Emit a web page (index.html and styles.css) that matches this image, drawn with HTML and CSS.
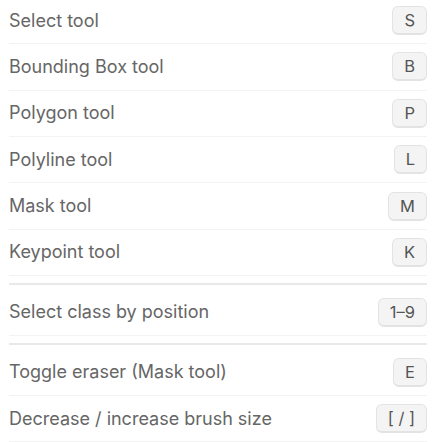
FILE: index.html
```html
<!DOCTYPE html>
<html>
<head>
<meta charset="utf-8">
<link rel="stylesheet" href="styles.css">
</head>
<body>
<div class="shortcuts">
  <ul class="section">
    <li class="row"><span class="label">Select tool</span><kbd class="key">S</kbd></li>
    <li class="row"><span class="label">Bounding Box tool</span><kbd class="key">B</kbd></li>
    <li class="row"><span class="label">Polygon tool</span><kbd class="key">P</kbd></li>
    <li class="row"><span class="label">Polyline tool</span><kbd class="key">L</kbd></li>
    <li class="row"><span class="label">Mask tool</span><kbd class="key">M</kbd></li>
    <li class="row"><span class="label">Keypoint tool</span><kbd class="key">K</kbd></li>
  </ul>
  <ul class="section">
    <li class="row"><span class="label">Select class by position</span><kbd class="key">1–9</kbd></li>
  </ul>
  <ul class="section last">
    <li class="row"><span class="label">Toggle eraser (Mask tool)</span><kbd class="key">E</kbd></li>
    <li class="row"><span class="label">Decrease / increase brush size</span><kbd class="key">[ / ]</kbd></li>
  </ul>
</div>
</body>
</html>
```
FILE: styles.css
```css
html, body {
  margin: 0;
  padding: 0;
  background: #ffffff;
}
body {
  font-family: Inter, "Noto Sans", sans-serif;
  color: #666666;
}
.shortcuts {
  margin: -2.2px 10px 0 9px;
  display: flex;
  flex-direction: column;
}
.section {
  list-style: none;
  margin: 0;
  padding: 0;
  display: flex;
  flex-direction: column;
}
.section:not(.last)::after {
  content: "";
  display: block;
  height: 2px;
  background: #e9e9e9;
  margin: 7px 0 4.5px;
}
.row {
  display: flex;
  align-items: center;
  justify-content: space-between;
  padding: 8.2px 0;
  border-bottom: 1px solid #f3f3f3;
}
.label {
  font-size: 18px;
  line-height: 24px;
}
.key {
  font-family: Inter, "Noto Sans", sans-serif;
  font-size: 16.5px;
  line-height: 26px;
  height: 26px;
  padding: 0 11px;
  color: #555555;
  background: #f4f4f4;
  border: 1px solid #e3e3e3;
  border-bottom-width: 2px;
  border-radius: 6px;
  box-sizing: content-box;
}
```
